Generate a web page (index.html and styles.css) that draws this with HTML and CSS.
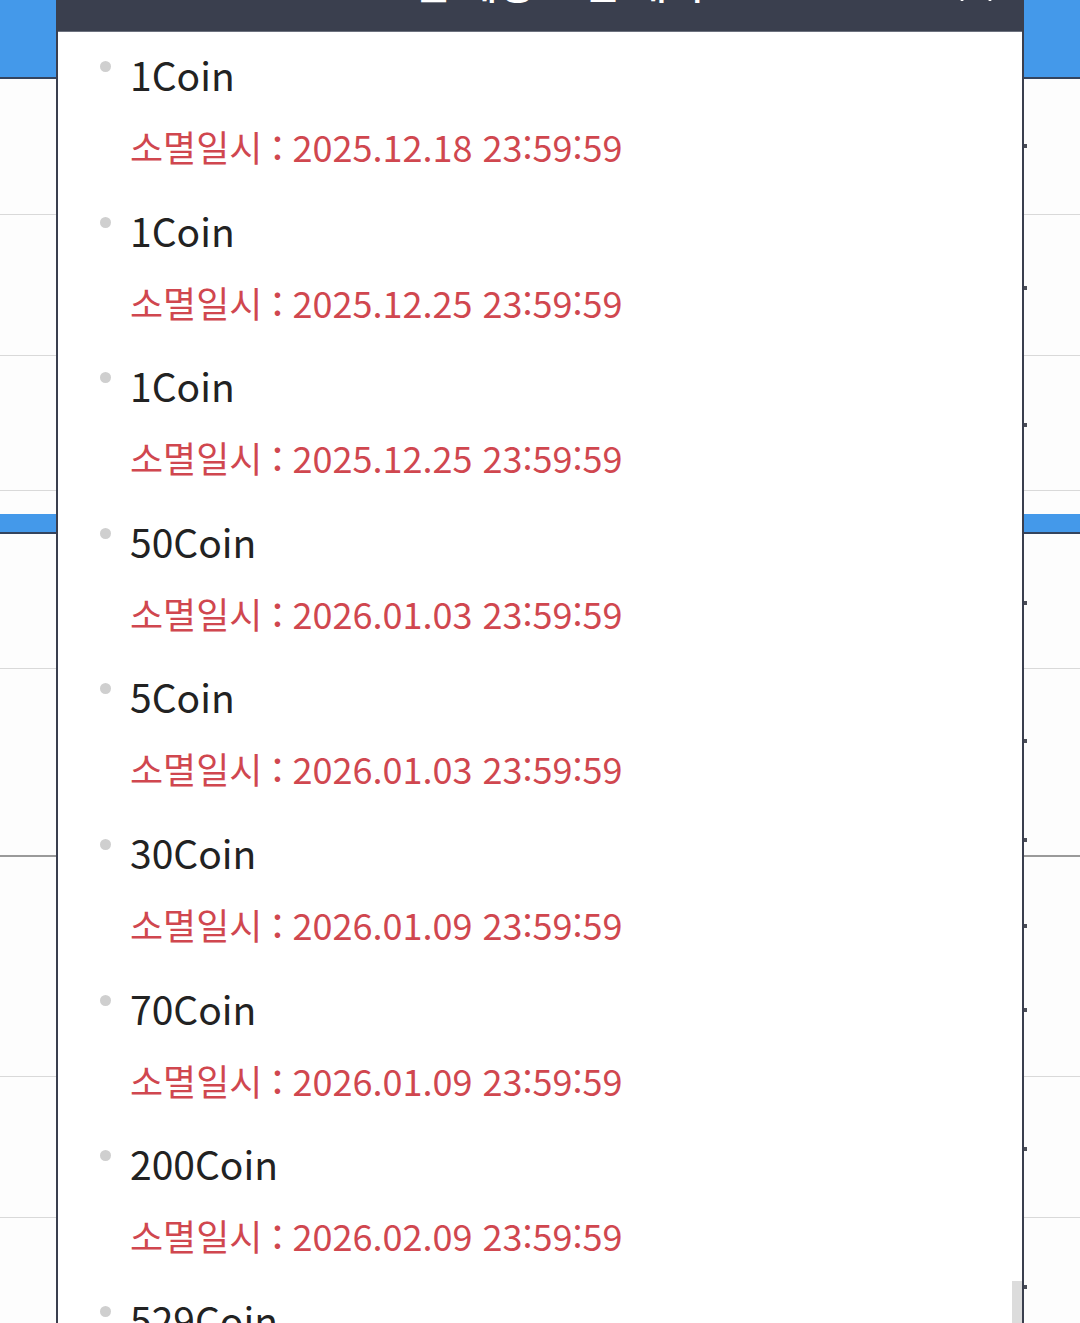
FILE: index.html
```html
<!DOCTYPE html>
<html lang="ko">
<head>
    <meta charset="UTF-8">
    <meta name="viewport" content="width=device-width, initial-scale=1.0">
    <title>소멸 예정 코인</title>
    <link rel="stylesheet" href="styles.css">
</head>
<body>
    <div class="page">
        <div class="bar bar-top"></div>
        <div class="row" style="height: 136px; padding-top: 65px;"><span class="tick"></span></div>
        <div class="row" style="height: 141px; padding-top: 71px;"><span class="tick"></span></div>
        <div class="row" style="height: 135px; padding-top: 67px;"><span class="tick"></span></div>
        <div class="spacer"></div>
        <div class="bar bar-mid"></div>
        <div class="row" style="height: 135px; padding-top: 67px;"><span class="tick"></span></div>
        <div class="row dark-line" style="height: 188px; padding-top: 70px;"><span class="tick"></span><span class="tick gap-95"></span></div>
        <div class="row" style="height: 220px; padding-top: 67px;"><span class="tick"></span><span class="tick gap-80"></span></div>
        <div class="row" style="height: 141px; padding-top: 70px;"><span class="tick"></span></div>
        <div class="row" style="height: 141px; padding-top: 67px;"><span class="tick"></span></div>
    </div>

    <div class="modal">
        <div class="modal-header">
            <h2 class="modal-title">소멸 예정 코인 내역</h2>
            <button class="modal-close" aria-label="닫기">
                <svg width="36" height="36" viewBox="0 0 36 36"><path d="M4 4 L32 32 M32 4 L4 32" stroke="#fff" stroke-width="4" stroke-linecap="round"/></svg>
            </button>
        </div>
        <ul class="coin-list">
            <li class="coin-item">
                <span class="dot"></span>
                <div class="coin-body">
                    <div class="coin-name">1Coin</div>
                    <div class="coin-expire">소멸일시<span class="colon">：</span>2025.12.18 23:59:59</div>
                </div>
            </li>
            <li class="coin-item">
                <span class="dot"></span>
                <div class="coin-body">
                    <div class="coin-name">1Coin</div>
                    <div class="coin-expire">소멸일시<span class="colon">：</span>2025.12.25 23:59:59</div>
                </div>
            </li>
            <li class="coin-item">
                <span class="dot"></span>
                <div class="coin-body">
                    <div class="coin-name">1Coin</div>
                    <div class="coin-expire">소멸일시<span class="colon">：</span>2025.12.25 23:59:59</div>
                </div>
            </li>
            <li class="coin-item">
                <span class="dot"></span>
                <div class="coin-body">
                    <div class="coin-name">50Coin</div>
                    <div class="coin-expire">소멸일시<span class="colon">：</span>2026.01.03 23:59:59</div>
                </div>
            </li>
            <li class="coin-item">
                <span class="dot"></span>
                <div class="coin-body">
                    <div class="coin-name">5Coin</div>
                    <div class="coin-expire">소멸일시<span class="colon">：</span>2026.01.03 23:59:59</div>
                </div>
            </li>
            <li class="coin-item">
                <span class="dot"></span>
                <div class="coin-body">
                    <div class="coin-name">30Coin</div>
                    <div class="coin-expire">소멸일시<span class="colon">：</span>2026.01.09 23:59:59</div>
                </div>
            </li>
            <li class="coin-item">
                <span class="dot"></span>
                <div class="coin-body">
                    <div class="coin-name">70Coin</div>
                    <div class="coin-expire">소멸일시<span class="colon">：</span>2026.01.09 23:59:59</div>
                </div>
            </li>
            <li class="coin-item">
                <span class="dot"></span>
                <div class="coin-body">
                    <div class="coin-name">200Coin</div>
                    <div class="coin-expire">소멸일시<span class="colon">：</span>2026.02.09 23:59:59</div>
                </div>
            </li>
            <li class="coin-item">
                <span class="dot"></span>
                <div class="coin-body">
                    <div class="coin-name">529Coin</div>
                    <div class="coin-expire">소멸일시<span class="colon">：</span>2026.02.28 23:59:59</div>
                </div>
            </li>
        </ul>
        <div class="scroll-thumb"></div>
    </div>
</body>
</html>
```

FILE: styles.css
```css
html, body {
    margin: 0;
    height: 100%;
    overflow: hidden;
}

body {
    font-family: "Noto Sans CJK KR", "Noto Sans", sans-serif;
    background-color: #fdfdfd;
}

/* background page behind the popup */
.page {
    display: flex;
    flex-direction: column;
}

.bar {
    background: #4499ea;
    border-bottom: 2px solid #34445e;
}

.bar-top {
    height: 77px;
}

.bar-mid {
    height: 18px;
}

.spacer {
    height: 23px;
}

.row {
    display: flex;
    flex-direction: column;
    align-items: flex-start;
    padding-left: 1022px;
    box-sizing: border-box;
    border-bottom: 1px solid #d9d9d9;
}

.row.dark-line {
    border-bottom: 2px solid #9a9a9a;
}

.tick {
    width: 5px;
    height: 4px;
    background: #4a4d57;
}

.gap-95 {
    margin-top: 95px;
}

.gap-80 {
    margin-top: 80px;
}

/* popup */
.modal {
    position: fixed;
    top: -58px;
    bottom: 0;
    left: 56px;
    width: 968px;
    box-sizing: border-box;
    background: #fff;
    border-left: 2px solid #3a3f4e;
    border-right: 2px solid #3a3f4e;
    overflow: hidden;
}

.modal-header {
    position: relative;
    height: 90px;
    box-sizing: border-box;
    background: #3a3f4e;
    border-bottom: 1px solid #6c717e;
    display: flex;
    align-items: flex-end;
    justify-content: center;
    padding-bottom: 29px;
}

.modal-title {
    margin: 0;
    font-size: 40px;
    line-height: 40px;
    font-weight: 500;
    color: #fff;
}

.modal-close {
    position: absolute;
    right: 28px;
    bottom: 28px;
    padding: 0;
    border: none;
    background: none;
    line-height: 0;
}

.coin-list {
    list-style: none;
    margin: 0;
    padding: 16px 0 0 42px;
}

.coin-item {
    display: flex;
    gap: 19px;
    margin-bottom: 31.6px;
}

.dot {
    width: 11px;
    height: 11px;
    margin-top: 13px;
    border-radius: 50%;
    background: #cfcfcf;
    flex-shrink: 0;
}

.coin-name {
    font-size: 39px;
    line-height: 52px;
    color: #222;
}

.coin-expire {
    margin-top: 20px;
    font-size: 36px;
    line-height: 52px;
    color: #d0474f;
}

.colon {
    margin: 0 -3px;
}

.scroll-thumb {
    position: absolute;
    right: 0;
    bottom: 0;
    width: 10px;
    height: 42px;
    background: #dcdcdc;
}
```
